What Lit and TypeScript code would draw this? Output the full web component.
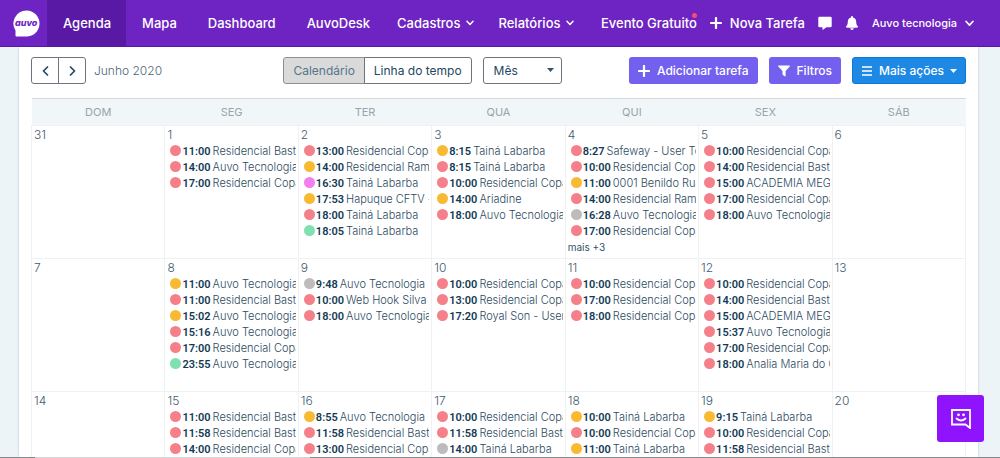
import { LitElement, html, css, svg } from "lit";
import { customElement, property } from "lit/decorators.js";

type Tone = "r" | "y" | "p" | "g" | "s";
type Task = [Tone, string, string];
interface Day { n: number; tasks?: Task[]; more?: number }

const WEEKDAYS = ["DOM", "SEG", "TER", "QUA", "QUI", "SEX", "SÁB"];
const BASTOS = "Residencial Basto";
const COPA = "Residencial Copa";
const RAMOS = "Residencial Ram";
const AUVO = "Auvo Tecnologia";
const TAINA = "Tainá Labarba";

const WEEKS: Day[][] = [
  [
    { n: 31 },
    { n: 1, tasks: [["r", "11:00", BASTOS], ["r", "14:00", AUVO], ["r", "17:00", COPA]] },
    { n: 2, tasks: [["r", "13:00", COPA], ["y", "14:00", RAMOS], ["p", "16:30", TAINA], ["y", "17:53", "Hapuque CFTV -"], ["r", "18:00", TAINA], ["g", "18:05", TAINA]] },
    { n: 3, tasks: [["y", "8:15", TAINA], ["r", "8:15", TAINA], ["r", "10:00", COPA], ["y", "14:00", "Ariadine"], ["r", "18:00", AUVO]] },
    { n: 4, more: 3, tasks: [["r", "8:27", "Safeway - User Te"], ["r", "10:00", COPA], ["y", "11:00", "0001 Benildo Rua"], ["r", "14:00", RAMOS], ["s", "16:28", AUVO], ["r", "17:00", COPA]] },
    { n: 5, tasks: [["r", "10:00", COPA], ["r", "14:00", "Residencial Bast"], ["r", "15:00", "ACADEMIA MEGA"], ["r", "17:00", COPA], ["r", "18:00", AUVO]] },
    { n: 6 },
  ],
  [
    { n: 7 },
    { n: 8, tasks: [["y", "11:00", AUVO], ["r", "11:00", BASTOS], ["y", "15:02", AUVO], ["r", "15:16", AUVO], ["r", "17:00", COPA], ["g", "23:55", AUVO]] },
    { n: 9, tasks: [["s", "9:48", AUVO], ["r", "10:00", "Web Hook Silva -"], ["r", "18:00", AUVO]] },
    { n: 10, tasks: [["r", "10:00", COPA], ["r", "13:00", COPA], ["r", "17:20", "Royal Son - User T"]] },
    { n: 11, tasks: [["r", "10:00", COPA], ["r", "17:00", COPA], ["r", "18:00", COPA]] },
    { n: 12, tasks: [["r", "10:00", COPA], ["r", "14:00", "Residencial Bast"], ["r", "15:00", "ACADEMIA MEGA"], ["r", "15:37", AUVO], ["r", "17:00", COPA], ["r", "18:00", "Analia Maria do C"]] },
    { n: 13 },
  ],
  [
    { n: 14 },
    { n: 15, tasks: [["r", "11:00", BASTOS], ["r", "11:58", BASTOS], ["r", "14:00", COPA]] },
    { n: 16, tasks: [["y", "8:55", AUVO], ["r", "11:58", BASTOS], ["r", "13:00", COPA]] },
    { n: 17, tasks: [["r", "10:00", COPA], ["r", "11:58", BASTOS], ["s", "14:00", TAINA]] },
    { n: 18, tasks: [["y", "10:00", TAINA], ["r", "10:00", COPA], ["y", "11:00", TAINA]] },
    { n: 19, tasks: [["y", "9:15", TAINA], ["r", "10:00", COPA], ["r", "11:58", BASTOS]] },
    { n: 20 },
  ],
];

const icon = (cls: string, box: string, body: unknown) =>
  html`<svg class=${cls} viewBox=${box} aria-hidden="true">${body}</svg>`;
const chevron = (cls: string) =>
  icon(cls, "0 0 8 6", svg`<path d="M1 1.2 4 4.4 7 1.2" fill="none" stroke="currentColor" stroke-width="1.5" stroke-linecap="round" stroke-linejoin="round"/>`);
const plus = (cls: string) =>
  icon(cls, "0 0 12 12", svg`<path d="M6 1v10M1 6h10" stroke="currentColor" stroke-width="2.2" stroke-linecap="round"/>`);

@customElement("auvo-header")
class AuvoHeader extends LitElement {
  static styles = css`
    :host { display: block; position: relative; z-index: 1; }
    .bar { display: flex; height: 47px; box-sizing: border-box; padding: 0 26px 0 13px; background: #6d24c2; border-bottom: 1px solid #5618a8; color: #fff; font-size: 13px; font-weight: 500; }
    a { color: inherit; text-decoration: none; white-space: nowrap; }
    .logo { display: flex; align-items: center; margin-right: 7px; }
    .logo svg { width: 27px; height: 27px; display: block; }
    .logo text { font: italic 800 9px Inter, sans-serif; fill: #6d24c2; }
    .menu { display: flex; }
    .item { display: flex; align-items: center; gap: 6px; padding: 0 15px 0 16px; }
    .item.drop { padding: 0 12px; }
    .item.on { background: #5a19a5; }
    .tools { display: flex; align-items: center; margin-left: auto; }
    .event { position: relative; }
    .dot { position: absolute; right: 0; top: -2px; width: 5px; height: 5px; border-radius: 50%; background: #fb4a6b; }
    .tool { display: flex; align-items: center; gap: 8px; margin-left: 13px; padding: 0; border: 0; background: none; color: inherit; font: inherit; white-space: nowrap; }
    .tool.user { font-size: 11px; }
    .chev { width: 8px; height: 6px; }
    .big { width: 9px; height: 7px; }
    .plus { width: 12px; height: 12px; }
    .glyph { width: 14px; height: 14px; display: block; }
  `;
  render() {
    return html`<header class="bar">
      <a class="logo" href="#" aria-label="Auvo">
        <svg viewBox="0 0 27 27"><path d="M13.5 0.5A13 13 0 1 1 13.5 26.5H3.2Q2.5 26.5 2.5 25.8V20.5A13 13 0 0 1 13.5 0.5Z" fill="#fff"/><text x="13.2" y="16" text-anchor="middle">auvo</text></svg>
      </a>
      <nav class="menu">
        <a class="item on" href="#">Agenda</a>
        <a class="item" href="#">Mapa</a>
        <a class="item" href="#">Dashboard</a>
        <a class="item" href="#">AuvoDesk</a>
        <a class="item drop" href="#">Cadastros ${chevron("chev")}</a>
        <a class="item drop" href="#">Relatórios ${chevron("chev")}</a>
      </nav>
      <div class="tools">
        <a class="event" href="#">Evento Gratuito<span class="dot"></span></a>
        <button class="tool">${plus("plus")} Nova Tarefa</button>
        <button class="tool" aria-label="Mensagens">${icon("glyph", "0 0 14 14", svg`<path d="M1.500.8h11a1.200 1.200 0 0 1 1.200 1.200v8a1.200 1.200 0 0 1-1.200 1.200H8.400L5 13.800q-.5.300-.5-.3v-2.300h-3A1.200 1.200 0 0 1 .3 10V2A1.200 1.200 0 0 1 1.500.8Z" fill="currentColor"/>`)}</button>
        <button class="tool" aria-label="Notificações">${icon("glyph", "0 0 14 14", svg`<path d="M7 0a1 1 0 0 1 1 1v.6c2 .5 3.200 2 3.200 4.100 0 2.500.6 3.500 1.500 4.400.6.700.2 1.600-.7 1.600H2c-.9 0-1.300-.9-.7-1.600.9-.9 1.500-1.900 1.500-4.400C2.800 3.600 4 2.100 6 1.600V1a1 1 0 0 1 1-1ZM5.200 12.300h3.600a1.800 1.700 0 0 1-3.600 0Z" fill="currentColor"/>`)}</button>
        <button class="tool user">Auvo tecnologia ${chevron("big")}</button>
      </div>
    </header>`;
  }
}

@customElement("agenda-toolbar")
class AgendaToolbar extends LitElement {
  static styles = css`
    :host { display: block; }
    .bar { display: grid; grid-template-columns: 27% auto 1fr; align-items: center; color: #33526b; font-size: 12px; }
    .side { display: flex; align-items: center; gap: 8px; }
    .mid { display: flex; gap: 11px; }
    .right { justify-content: flex-end; gap: 11px; }
    .group { display: flex; }
    button, select { box-sizing: border-box; height: 27px; border: 1px solid #6c757d; background: #fff; color: #24475f; font: inherit; white-space: nowrap; }
    .group button { padding: 0 9px; border-radius: 0 3px 3px 0; margin-left: -1px; }
    .group button:first-child { border-radius: 3px 0 0 3px; margin-left: 0; }
    .group .arrow { display: grid; place-items: center; width: 28px; padding: 0; }
    .group .on { background: #dadada; color: #56758a; border-color: #8a9196; }
    .arrow svg { width: 7px; height: 10px; }
    .month { color: #4c6679; font-weight: 300; }
    .pick { position: relative; display: flex; }
    select { appearance: none; width: 79px; padding: 0 10px; border-radius: 3px; }
    .pick svg { position: absolute; right: 8px; top: 11px; pointer-events: none; }
    .caret { width: 7px; height: 4px; }
    .main { display: flex; align-items: center; gap: 7px; padding: 0 9px; border: 0; border-radius: 3px; background: #7460ee; color: #fff; font-weight: 500; }
    .blue { gap: 6px; padding: 0 8px; background: #1e88e5; border: 1px solid #0a7ad8; }
    .ico { width: 12px; height: 12px; }
  `;
  render() {
    const caret = icon("caret", "0 0 7 4", svg`<path d="M0 0H7L3.500 4Z" fill="currentColor"/>`);
    const arrow = (d: string) => icon("", "0 0 7 10", svg`<path d=${d} fill="none" stroke="currentColor" stroke-width="1.700" stroke-linecap="round" stroke-linejoin="round"/>`);
    return html`<div class="bar">
      <div class="side">
        <div class="group">
          <button class="arrow" aria-label="Anterior">${arrow("M5.500 1 1.500 5l4 4")}</button>
          <button class="arrow" aria-label="Próximo">${arrow("M1.500 1l4 4-4 4")}</button>
        </div>
        <span class="month">Junho 2020</span>
      </div>
      <div class="mid">
        <div class="group"><button class="on">Calendário</button><button>Linha do tempo</button></div>
        <div class="pick"><select aria-label="Período"><option>Mês</option><option>Semana</option><option>Dia</option></select>${caret}</div>
      </div>
      <div class="side right">
        <button class="main">${plus("ico")} Adicionar tarefa</button>
        <button class="main">${icon("ico", "0 0 12 12", svg`<path d="M.5.5h11q.7.3.2 1L7.600 5.900v5q-.1.800-.8.400L4.900 9.900q-.4-.3-.4-.7V5.900L.3 1.500Q-.2.8.5.5Z" fill="currentColor"/>`)} Filtros</button>
        <button class="main blue">${icon("ico", "0 0 12 12", svg`<path d="M1 2h10M1 6h10M1 10h10" stroke="currentColor" stroke-width="1.600"/>`)} Mais ações ${caret}</button>
      </div>
    </div>`;
  }
}

@customElement("agenda-month")
class AgendaMonth extends LitElement {
  @property({ attribute: false }) weeks: Day[][] = [];
  static styles = css`
    :host { display: block; }
    table { width: 100%; table-layout: fixed; border-collapse: collapse; border-top: 1px solid #d5d9dc; }
    th { height: 26px; padding: 0; background: #f1f7f8; color: #99a3ab; font-size: 11px; font-weight: 400; }
    td { height: 132px; padding: 0; vertical-align: top; border: 1px solid #eff1f3; }
    .num { padding: 0 2px; font-size: 12px; line-height: 17px; font-weight: 300; color: #3f5b70; }
    ul { list-style: none; margin: 0 2px 0 5px; padding: 0; }
    li { display: flex; align-items: center; gap: 2px; height: 16px; overflow: hidden; font-size: 11px; white-space: nowrap; color: #2c4a62; }
    .time { margin-left: -1px; font-family: Roboto, sans-serif; font-weight: 600; color: #123a55; }
    .name { font-weight: 300; }
    .pin { flex: none; width: 11px; height: 11px; margin-bottom: 2px; border-radius: 50%; }
    .r { background: #f6808a; } .y { background: #f8ba33; } .p { background: #f47df0; } .g { background: #7fe0b1; } .s { background: #bdbbbb; }
    .more { display: block; padding: 0 2px; font-size: 10px; line-height: 16px; color: #34526a; text-decoration: none; }
  `;
  render() {
    return html`<table>
      <thead><tr>${WEEKDAYS.map((d) => html`<th scope="col">${d}</th>`)}</tr></thead>
      <tbody>${this.weeks.map((w) => html`<tr>${w.map((d) => html`<td>
        <div class="num">${d.n}</div>
        ${d.tasks ? html`<ul>${d.tasks.map(([tone, time, name]) => html`<li><span class="pin ${tone}"></span><span class="time">${time}</span><span class="name">${name}</span></li>`)}</ul>` : ""}
        ${d.more ? html`<a class="more" href="#">mais +${d.more}</a>` : ""}
      </td>`)}</tr>`)}</tbody>
    </table>`;
  }
}

@customElement("app-root")
class AppRoot extends LitElement {
  static styles = css`
    :host { display: flex; flex-direction: column; height: 100vh; overflow: hidden; position: relative; background: #edf4f8; font-family: Inter, "Open Sans", sans-serif; }
    .panel { flex: 1; min-height: 0; overflow: hidden; margin: 0 22px 0 19px; padding: 10px 12px 0; background: #fff; box-shadow: 0 0 2px #aebfcb; }
    .month { margin-top: 14px; }
    .edge { position: relative; height: 1px; background: linear-gradient(to right, #858a8d 0 3.5%, #d3d5d6 3.5% 31%, #858a8d 31%); }
    .chat { position: absolute; right: 16px; bottom: 16px; width: 47px; height: 47px; display: grid; place-items: center; padding: 0; border: 0; border-radius: 3px; background: #9013fe; color: #fff; }
    .chat svg { width: 20px; height: 20px; }
  `;
  render() {
    return html`<auvo-header></auvo-header>
      <main class="panel">
        <agenda-toolbar></agenda-toolbar>
        <agenda-month class="month" .weeks=${WEEKS}></agenda-month>
      </main>
      <div class="edge"></div>
      <button class="chat" aria-label="Abrir chat">${icon("", "0 0 20 20", svg`<g fill="none" stroke="currentColor" stroke-width="1.800"><path d="M1 1H19V19L14.500 15.500H1Z"/><path d="M5.500 9.500q4.500 4 9 0" stroke-linecap="round"/></g><circle cx="7.500" cy="5.800" r="1.400" fill="currentColor"/><circle cx="12.500" cy="5.800" r="1.400" fill="currentColor"/>`)}</button>`;
  }
}
